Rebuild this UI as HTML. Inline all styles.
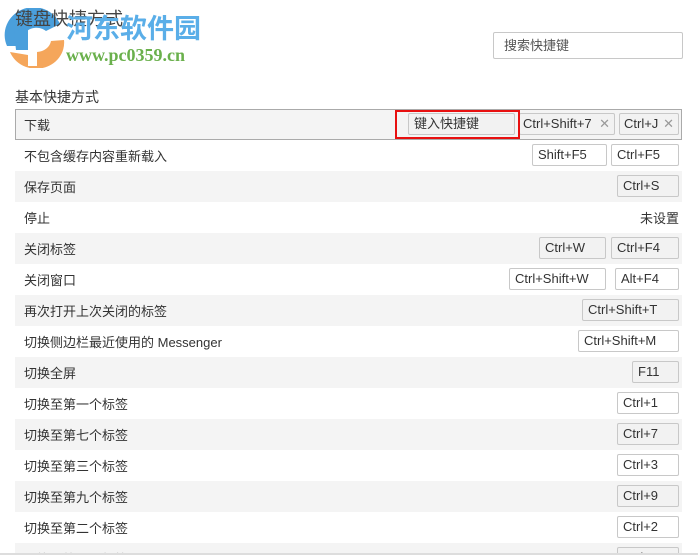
<!DOCTYPE html>
<html style="overflow:hidden;width:698px;height:555px"><head><meta charset="utf-8"><style>
body{margin:0;width:698px;height:555px;overflow:hidden;background:#fff;font-family:"Liberation Sans","Noto Sans CJK SC",sans-serif;color:#333;position:relative}
.a{position:absolute}
.row{position:absolute;left:15px;width:667px;height:31px;font-size:13px}
.row .t{position:absolute;left:9px;top:6px}
.g{background:#f4f4f4}
.k{position:absolute;top:4px;height:22px;border:1px solid #c8c8c8;box-sizing:border-box;border-radius:2px;font-size:13px;line-height:20px;padding-left:5px;color:#333;white-space:nowrap}
.w .k{background:#fff}
.g .k{background:#f2f2f2}
.x{position:absolute;right:4px;color:#999;font-size:13px}
</style></head><body>
<svg class="a" style="left:4px;top:8px" width="62" height="60" viewBox="0 0 62 60">
<path d="M3 38 A28 27 0 0 1 56 16 L42 23 A15 14 0 0 0 18 30 L18 38 Z" fill="#4a9fdc"/>
<path d="M10 24 L24 18 L24 42 L12 42 Z" fill="#4a9fdc"/>
<path d="M6 44 A28 26 0 0 0 60 32 L47 33 A15 13 0 0 1 33 44 L33 58 L24 58 L24 47 Z" fill="#f5a65b"/>
</svg>
<div class="a" style="left:15px;top:5px;font-size:18px;color:#444">键盘快捷方式</div>
<div class="a" style="left:66px;top:11px;font-size:27px;font-weight:bold;color:#5aaee8;font-family:'Noto Sans CJK SC',sans-serif;line-height:32px">河东软件园</div>
<div class="a" style="left:66px;top:45px;font-size:18px;font-weight:bold;color:#6ab04c;font-family:'Liberation Serif',serif">www.pc0359.cn</div>
<div class="a" style="left:493px;top:32px;width:190px;height:27px;border:1px solid #c8c8c8;box-sizing:border-box;border-radius:2px;font-size:13px;line-height:25px;padding-left:10px;color:#555">搜索快捷键</div>
<div class="a" style="left:15px;top:87px;font-size:14px;color:#333">基本快捷方式</div>

<div class="row g" style="top:109px;border:1px solid #aaa;box-sizing:border-box;height:31px"><span class="t" style="left:8px;top:5px">下载</span>
<div class="k" style="left:392px;width:107px;top:3px">键入快捷键</div>
<div class="k" style="left:503px;width:96px;top:3px;padding-left:3px">Ctrl+Shift+7<span class="x">✕</span></div>
<div class="k" style="left:603px;width:60px;top:3px;padding-left:4px">Ctrl+J<span class="x">✕</span></div>
</div>
<div class="a" style="left:395px;top:110px;width:125px;height:29px;border:2px solid #e81010;box-sizing:border-box"></div>

<div class="row w" style="top:140px"><span class="t">不包含缓存内容重新载入</span><div class="k" style="left:517px;width:75px">Shift+F5</div><div class="k" style="left:596px;width:68px">Ctrl+F5</div></div>
<div class="row g" style="top:171px"><span class="t">保存页面</span><div class="k" style="left:602px;width:62px">Ctrl+S</div></div>
<div class="row w" style="top:202px"><span class="t">停止</span><span class="a" style="right:3px;top:6px">未设置</span></div>
<div class="row g" style="top:233px"><span class="t">关闭标签</span><div class="k" style="left:524px;width:67px">Ctrl+W</div><div class="k" style="left:596px;width:68px">Ctrl+F4</div></div>
<div class="row w" style="top:264px"><span class="t">关闭窗口</span><div class="k" style="left:494px;width:97px">Ctrl+Shift+W</div><div class="k" style="left:600px;width:64px">Alt+F4</div></div>
<div class="row g" style="top:295px"><span class="t">再次打开上次关闭的标签</span><div class="k" style="left:567px;width:97px">Ctrl+Shift+T</div></div>
<div class="row w" style="top:326px"><span class="t">切换侧边栏最近使用的 Messenger</span><div class="k" style="left:563px;width:101px">Ctrl+Shift+M</div></div>
<div class="row g" style="top:357px"><span class="t">切换全屏</span><div class="k" style="left:617px;width:47px">F11</div></div>
<div class="row w" style="top:388px"><span class="t">切换至第一个标签</span><div class="k" style="left:602px;width:62px">Ctrl+1</div></div>
<div class="row g" style="top:419px"><span class="t">切换至第七个标签</span><div class="k" style="left:602px;width:62px">Ctrl+7</div></div>
<div class="row w" style="top:450px"><span class="t">切换至第三个标签</span><div class="k" style="left:602px;width:62px">Ctrl+3</div></div>
<div class="row g" style="top:481px"><span class="t">切换至第九个标签</span><div class="k" style="left:602px;width:62px">Ctrl+9</div></div>
<div class="row w" style="top:512px"><span class="t">切换至第二个标签</span><div class="k" style="left:602px;width:62px">Ctrl+2</div></div>
<div class="row g" style="top:543px;height:10px;overflow:hidden"><span class="t">切换至第五个标签</span><div class="k" style="left:602px;width:62px">Ctrl+5</div></div>
<div class="a" style="left:0;top:553px;width:698px;height:2px;background:#ddd"></div>
</body></html>
